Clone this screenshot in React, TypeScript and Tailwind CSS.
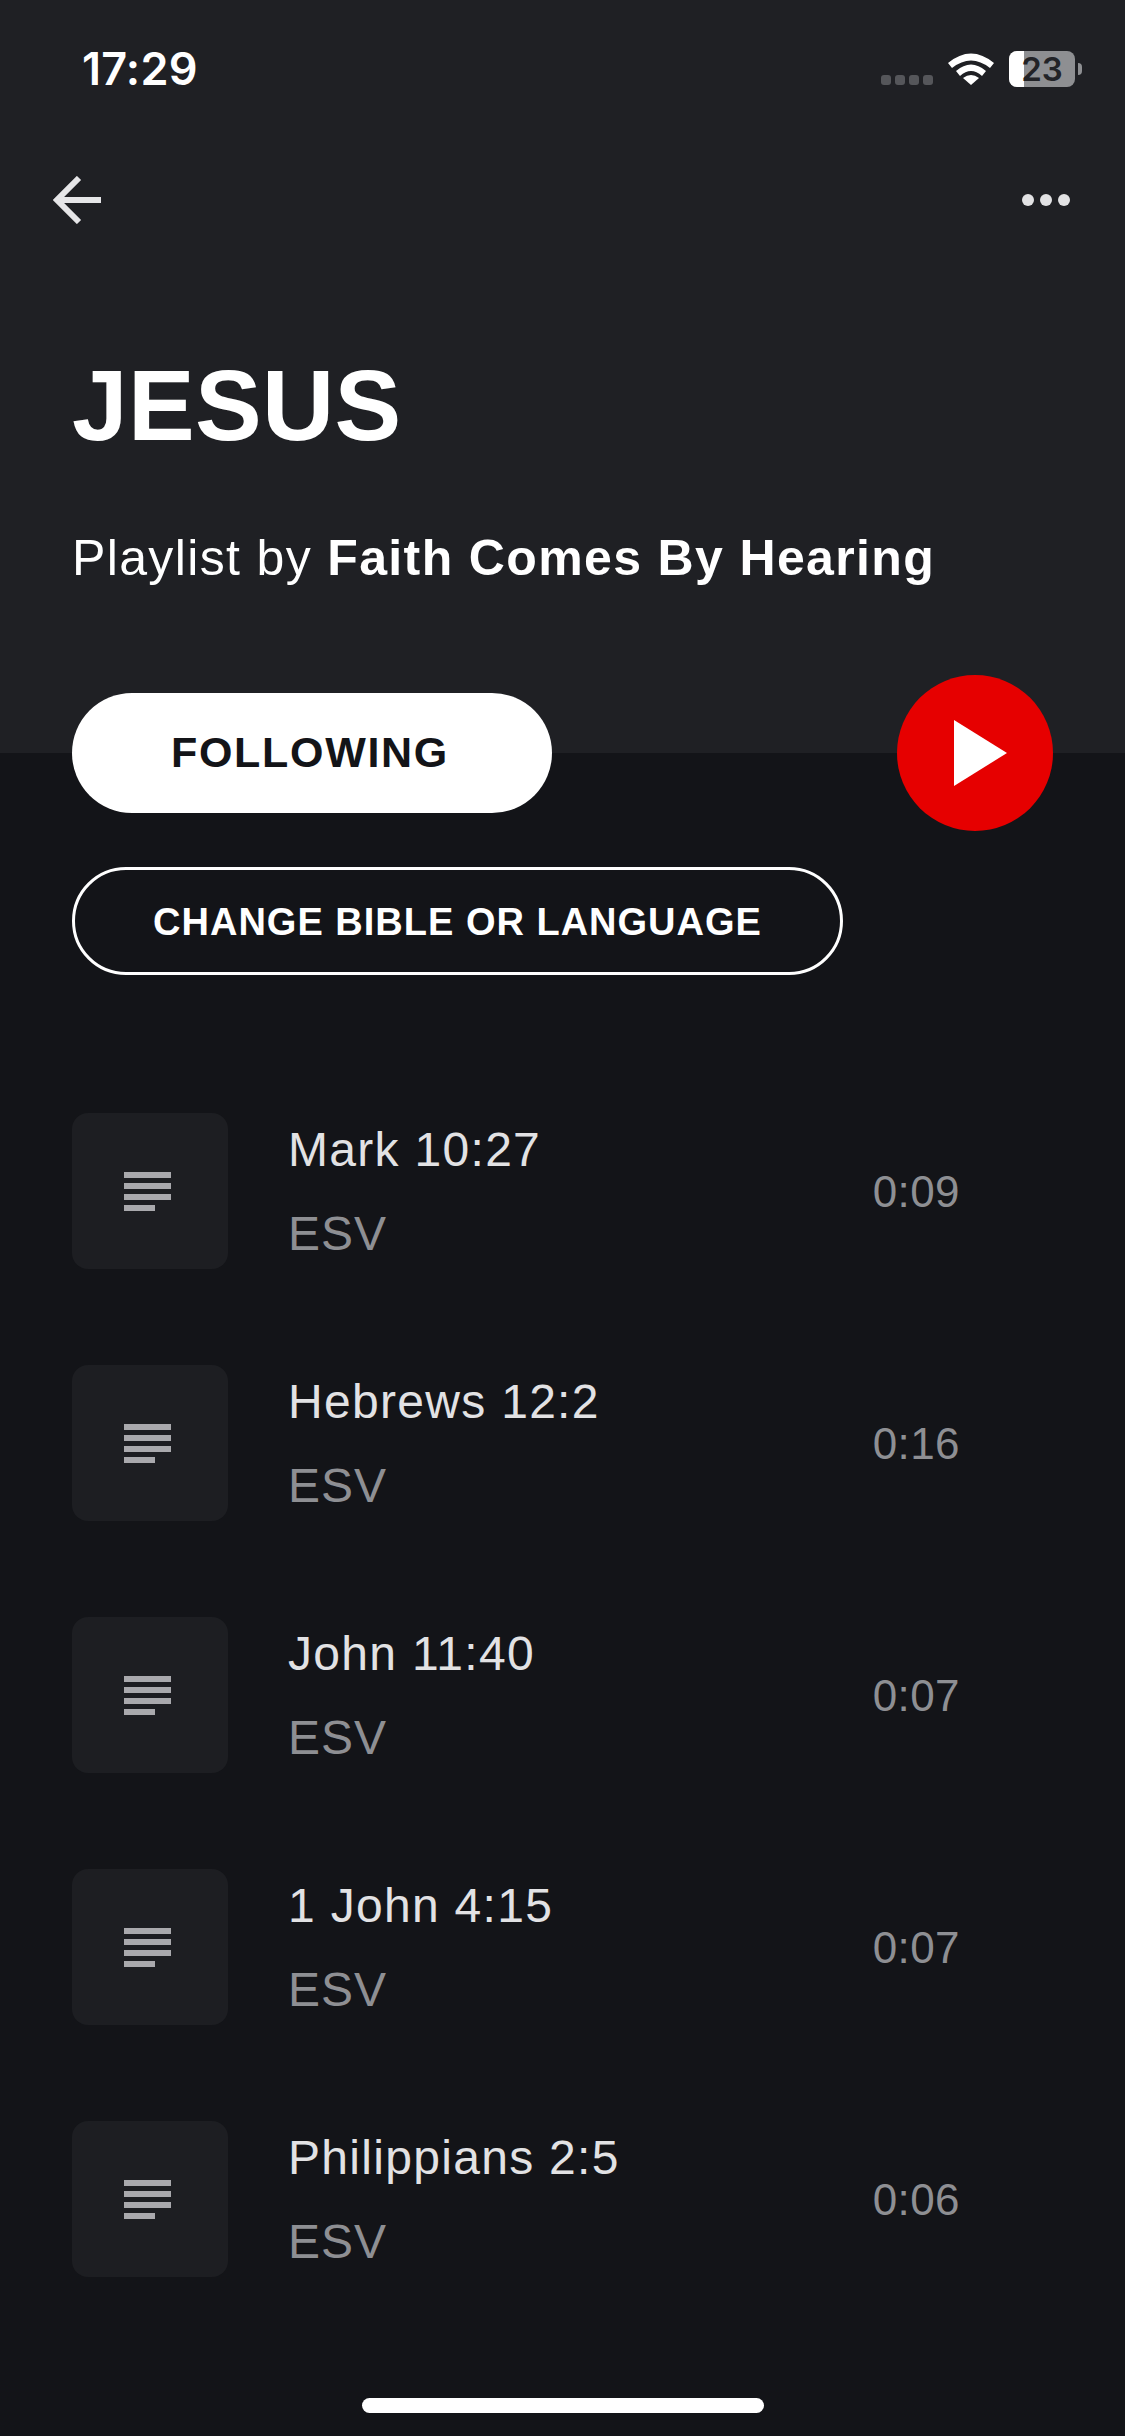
const tracks = [
  { title: 'Mark 10:27', time: '0:09' },
  { title: 'Hebrews 12:2', time: '0:16' },
  { title: 'John 11:40', time: '0:07' },
  { title: '1 John 4:15', time: '0:07' },
  { title: 'Philippians 2:5', time: '0:06' },
];

function StatusBar() {
  return (
    <div className="flex h-[140px] items-start justify-between pt-[44px]">
      <span className="ml-[82px] font-['Inter',sans-serif] text-[45px] leading-[50px] font-semibold tracking-[0.2px] text-white">17:29</span>
      <div className="mr-[43px] flex h-[50px] items-start">
        <div className="mt-[31px] mr-[15px] flex gap-[4px]">
          {[0, 1, 2, 3].map((i) => (
            <span key={i} className="h-[10px] w-[10px] rounded-[3px] bg-[#55565a]" />
          ))}
        </div>
        <svg className="mt-[8px]" width="46" height="34" viewBox="0 0 46 34" fill="none">
          <path d="M0 11 Q23 -8 46 11 L42 16 Q23 1 4 16 Z" fill="#fff" />
          <path d="M8 19 Q23 6 38 19 L34 24 Q23 14 12 24 Z" fill="#fff" />
          <path d="M15 26 Q23 20 31 26 L23 33 Z" fill="#fff" />
        </svg>
        <div className="relative mt-[7px] ml-[15px] h-[36px] w-[66px] rounded-[8px] bg-[#8e8f92]">
          <div className="h-full w-[15px] rounded-l-[8px] bg-white" />
          <span className="absolute inset-0 flex items-center justify-center font-['Inter',sans-serif] text-[33px] leading-none font-semibold text-[#222327]">23</span>
        </div>
        <span className="mt-[19px] ml-[3px] h-[12px] w-[4px] rounded-r-full bg-[#8e8f92]" />
      </div>
    </div>
  );
}

function TrackRow({ title, time }: { title: string; time: string }) {
  return (
    <div className="flex h-[156px] items-center">
      <div className="flex h-[156px] w-[156px] shrink-0 items-center justify-center rounded-[16px] bg-[#1d1e22]">
        <svg className="mr-[5px]" width="47" height="39" viewBox="0 0 47 39" fill="#a9a9ad">
          <rect x="0" y="0" width="47" height="6" />
          <rect x="0" y="11" width="47" height="6" />
          <rect x="0" y="22" width="47" height="6" />
          <rect x="0" y="33" width="31" height="6" />
        </svg>
      </div>
      <div className="ml-[60px] flex-1 pt-[2px]">
        <p className="text-[48px] leading-[60px] tracking-[1.3px] text-[#e2e2e4]">{title}</p>
        <p className="mt-[24px] text-[48px] leading-[60px] tracking-[1px] text-[#8e8f93]">ESV</p>
      </div>
      <span className="mr-[93px] pt-[2px] text-[44px] tracking-[0.4px] text-[#8e8f93]">{time}</span>
    </div>
  );
}

export default function App() {
  return (
    <div className="h-[2436px] w-[1125px] overflow-hidden bg-[linear-gradient(#1f2024_753px,#131418_753px)] font-['Liberation_Sans',Arial,sans-serif] text-white">
      <StatusBar />
      <div className="flex h-[120px] items-center justify-between pr-[55px] pl-[53px]">
        <svg width="48" height="48" viewBox="0 0 48 48" fill="none" stroke="#e6e6e8" strokeWidth="6">
          <path d="M48 24H4M26 2L4 24L26 46" />
        </svg>
        <div className="flex gap-[6px]">
          {[0, 1, 2].map((i) => (
            <span key={i} className="h-[12px] w-[12px] rounded-full bg-[#e2e2e4]" />
          ))}
        </div>
      </div>
      <div className="px-[72px]">
        <h1 className="mt-[90px] text-[100px] leading-[110px] font-bold tracking-[0.3px]">JESUS</h1>
        <p className="mt-[68px] text-[50px] leading-[60px] tracking-[1.36px]">
          Playlist by <span className="font-bold">Faith Comes By Hearing</span>
        </p>
        <div className="mt-[87px] flex items-center justify-between">
          <button className="h-[120px] w-[480px] rounded-full bg-white pr-[4px] pb-[2px] text-[43px] font-bold tracking-[1.7px] text-[#131418]">FOLLOWING</button>
          <button className="flex h-[156px] w-[156px] items-center justify-center rounded-full bg-[#e60000]">
            <svg className="ml-[11px]" width="53" height="66" viewBox="0 0 53 66" fill="#fff">
              <path d="M0 0L53 33L0 66Z" />
            </svg>
          </button>
        </div>
        <button className="mt-[36px] block h-[108px] w-[771px] rounded-full border-[3px] border-white pt-[2px] text-[38px] font-bold tracking-[1px]">CHANGE BIBLE OR LANGUAGE</button>
        <div className="mt-[138px] flex flex-col gap-[96px]">
          {tracks.map((t) => (
            <TrackRow key={t.title} title={t.title} time={t.time} />
          ))}
        </div>
      </div>
      <div className="mx-auto mt-[121px] h-[15px] w-[402px] rounded-full bg-white" />
    </div>
  );
}
